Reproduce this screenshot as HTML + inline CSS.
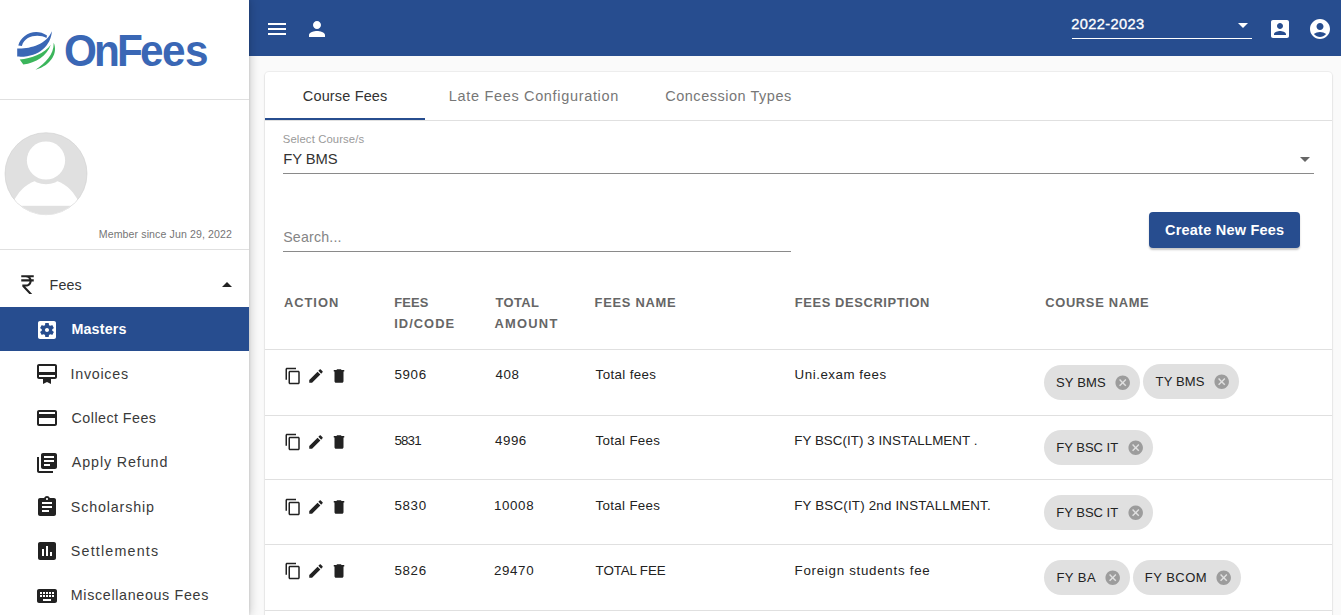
<!DOCTYPE html>
<html><head><meta charset="utf-8">
<style>
*{box-sizing:border-box;margin:0;padding:0}
html,body{width:1341px;height:615px;overflow:hidden;background:#fafafa;font-family:"Liberation Sans",sans-serif;color:#222;position:relative}
.a{position:absolute}
.t{position:absolute;white-space:nowrap;line-height:1}
svg{position:absolute;display:block}
#ov{position:absolute;left:0;top:0;width:1341px;height:615px;z-index:10}
.chip{position:absolute;height:34.8px;border-radius:17.4px;background:#e0e0e0}
.x{position:absolute;width:14.5px;height:14.5px;border-radius:50%;background:#9b9b9b}
.x:before,.x:after{content:"";position:absolute;left:3.25px;top:6.5px;width:8px;height:1.6px;background:#e0e0e0;transform:rotate(45deg)}
.x:after{transform:rotate(-45deg)}
</style></head><body>

<div class="a" style="left:265px;top:72px;width:1067px;height:600px;background:#fff;border-radius:4px;box-shadow:0 0 0 1px rgba(0,0,0,.045),0 1px 3px rgba(0,0,0,.08)"></div>
<div class="a" style="left:249px;top:0;width:1092px;height:56px;background:#274d8f"></div>
<div class="a" style="left:0;top:0;width:249px;height:615px;background:#fff;box-shadow:2px 0 9px rgba(0,0,0,.17),1px 0 2px rgba(0,0,0,.08)"></div>
<div id="ov">
<svg style="left:14px;top:28px" width="46" height="44" viewBox="0 0 46 44">
<path d="M4.3 17.5 C7 7, 21 -1, 33 7.5 L32.5 9.9 C25 6, 11 7, 7.9 17.9 Z" fill="#3a67b5"/>
<path d="M3.2 20.4 C15 21, 32 17, 37.9 3.2 C37 18, 24 30, 3.2 28.6 Z" fill="#3a67b5"/>
<path d="M5.7 31.5 C17 31, 31 25, 36.8 16.8 C33 28, 22 35, 9.3 36.5 Z" fill="#3bb55b"/>
<path d="M39.7 14.7 C44 24, 38 37, 21.5 41.8 C31 35, 40 27, 39.7 14.7 Z" fill="#3bb55b"/>
</svg>
<div class="t" style="left:63.9px;top:28px;font-size:45px;font-weight:bold;color:#3a67b5;transform:scaleX(0.94);transform-origin:0 0">O</div><div class="t" style="left:94.2px;top:28px;font-size:45px;font-weight:bold;color:#3a67b5;transform:scaleX(0.94);transform-origin:0 0">n</div><div class="t" style="left:117.3px;top:28px;font-size:45px;font-weight:bold;color:#3a67b5;transform:scaleX(0.94);transform-origin:0 0">F</div><div class="t" style="left:140.2px;top:28px;font-size:45px;font-weight:bold;color:#3a67b5;transform:scaleX(0.94);transform-origin:0 0">e</div><div class="t" style="left:161.9px;top:28px;font-size:45px;font-weight:bold;color:#3a67b5;transform:scaleX(0.94);transform-origin:0 0">e</div><div class="t" style="left:184.7px;top:28px;font-size:45px;font-weight:bold;color:#3a67b5;transform:scaleX(0.94);transform-origin:0 0">s</div>
<div class="a" style="left:0;top:99px;width:249px;height:1px;background:#e0e0e0"></div>
<svg style="left:4px;top:132px" width="84" height="84" viewBox="4 132 84 84">
<defs><clipPath id="avc"><circle cx="46" cy="173.7" r="40.8"/></clipPath></defs>
<circle cx="46" cy="173.7" r="41" fill="#e0e0e0" stroke="#cfcfcf" stroke-width="0.6"/>
<g clip-path="url(#avc)">
<path d="M8 225 A38 46 0 0 1 84 225 Z" fill="#fff"/>
<rect x="0" y="205.8" width="92" height="12" fill="#e0e0e0"/>
<circle cx="46" cy="160.5" r="23.8" fill="#e0e0e0"/>
<circle cx="46" cy="160.5" r="19.1" fill="#fff"/>
</g>
</svg>
<div class="t" id="member" style="left:98.8px;top:228.71px;font-size:10.58px;letter-spacing:0.104px;color:#757575;">Member since Jun 29, 2022</div>
<div class="a" style="left:0;top:249px;width:249px;height:1px;background:#e0e0e0"></div>
<svg style="left:14.8px;top:271.9px" width="25" height="25" viewBox="0 0 24 24"><path fill="#222" d="M13.66 7c-.56-1.18-1.76-2-3.16-2H6V3h12v2h-3.26c.48.58.84 1.26 1.050 2H18v2h-2.02c-.25 2.8-2.61 5-5.48 5h-.73l6.73 7h-2.77L7 14v-2h3.5c1.76 0 3.22-1.3 3.46-3H6V7h7.66z"/></svg>
<div class="t" id="fees" style="left:49.6px;top:277.85px;font-size:14.3px;letter-spacing:0.068px;color:#333;">Fees</div>
<svg style="left:215px;top:273px" width="24" height="24" viewBox="0 0 24 24"><path d="M7 14l5-5 5 5z" fill="#222"/></svg>
<div class="a" style="left:0;top:307px;width:249px;height:43.5px;background:#274d8f"></div>
<svg style="left:34.5px;top:318px" width="24" height="24" viewBox="0 0 24 24"><path fill="#fff" d="M12 10c-1.1 0-2 .9-2 2s.9 2 2 2 2-.9 2-2-.9-2-2-2zm7-7H5c-1.11 0-2 .9-2 2v14c0 1.1.89 2 2 2h14c1.11 0 2-.9 2-2V5c0-1.1-.89-2-2-2zm-1.75 9c0 .23-.02.46-.05.68l1.48 1.16c.13.11.17.3.08.45l-1.4 2.42c-.09.15-.27.21-.43.15l-1.74-.7c-.36.28-.76.51-1.18.69l-.26 1.85c-.03.17-.18.3-.35.3h-2.8c-.17 0-.32-.13-.35-.29l-.26-1.85c-.43-.18-.82-.41-1.18-.69l-1.74.7c-.16.06-.34 0-.43-.15l-1.4-2.42c-.09-.15-.05-.34.08-.45l1.48-1.16c-.03-.23-.05-.46-.05-.69 0-.23.02-.46.05-.68l-1.48-1.16c-.13-.11-.17-.3-.08-.45l1.4-2.42c.09-.15.27-.21.43-.15l1.74.7c.36-.28.76-.51 1.18-.69l.26-1.85c.03-.17.18-.3.35-.3h2.8c.17 0 .32.13.35.29l.26 1.85c.43.18.82.41 1.18.69l1.74-.7c.16-.06.34 0 .43.15l1.4 2.42c.09.15.05.34-.08.45l-1.48 1.16c.03.23.05.46.05.69z"/></svg>
<div class="t" id="masters" style="left:71.4px;top:321.85px;font-size:14.3px;letter-spacing:0.183px;color:#fff;font-weight:bold;">Masters</div>
<svg style="left:35px;top:362px" width="24" height="24" viewBox="0 0 24 24"><path fill="#222" d="M20 2H4c-1.11 0-2 .89-2 2v11c0 1.11.89 2 2 2h4v5l4-2 4 2v-5h4c1.11 0 2-.89 2-2V4c0-1.11-.89-2-2-2zm0 13H4v-2h16v2zm0-5H4V4h16v6z"/></svg>
<div class="t" id="invoices" style="left:70.6px;top:366.95px;font-size:14.3px;letter-spacing:0.714px;color:#3a3a3a;">Invoices</div>
<svg style="left:35px;top:406px" width="24" height="24" viewBox="0 0 24 24"><path fill="#222" d="M20 4H4c-1.11 0-1.99.89-1.99 2L2 18c0 1.11.89 2 2 2h16c1.11 0 2-.89 2-2V6c0-1.11-.89-2-2-2zm0 14H4v-6h16v6zm0-10H4V6h16v2z"/></svg>
<div class="t" id="collect" style="left:71.6px;top:410.85px;font-size:14.3px;letter-spacing:0.447px;color:#3a3a3a;">Collect Fees</div>
<svg style="left:35px;top:451px" width="24" height="24" viewBox="0 0 24 24"><path fill="#222" d="M4 6H2v14c0 1.1.9 2 2 2h14v-2H4V6zm16-4H8c-1.1 0-2 .9-2 2v12c0 1.1.9 2 2 2h12c1.1 0 2-.9 2-2V4c0-1.1-.9-2-2-2zm-1 9H9V9h10v2zm-4 4H9v-2h6v2zm4-8H9V5h10v2z"/></svg>
<div class="t" id="apply" style="left:71.8px;top:455.14px;font-size:14.3px;letter-spacing:0.882px;color:#3a3a3a;">Apply Refund</div>
<svg style="left:35px;top:495px" width="24" height="24" viewBox="0 0 24 24"><path fill="#222" d="M19 3h-4.18C14.4 1.84 13.3 1 12 1c-1.3 0-2.4.84-2.82 2H5c-1.1 0-2 .9-2 2v14c0 1.1.9 2 2 2h14c1.1 0 2-.9 2-2V5c0-1.1-.9-2-2-2zm-7 0c.55 0 1 .45 1 1s-.45 1-1 1-1-.45-1-1 .45-1 1-1zm2 14H7v-2h7v2zm3-4H7v-2h10v2zm0-4H7V7h10v2z"/></svg>
<div class="t" id="scholar" style="left:70.8px;top:499.85px;font-size:14.3px;letter-spacing:0.85px;color:#3a3a3a;">Scholarship</div>
<svg style="left:35px;top:539px" width="24" height="24" viewBox="0 0 24 24"><path fill="#222" d="M19 3H5c-1.1 0-2 .9-2 2v14c0 1.1.9 2 2 2h14c1.1 0 2-.9 2-2V5c0-1.1-.9-2-2-2zM9 17H7v-7h2v7zm4 0h-2V7h2v10zm4 0h-2v-4h2v4z"/></svg>
<div class="t" id="settle" style="left:70.8px;top:543.85px;font-size:14.3px;letter-spacing:1.18px;color:#3a3a3a;">Settlements</div>
<svg style="left:35px;top:584px" width="24" height="24" viewBox="0 0 24 24"><path fill="#222" d="M20 5H4c-1.1 0-1.99.9-1.99 2L2 17c0 1.1.9 2 2 2h16c1.1 0 2-.9 2-2V7c0-1.1-.9-2-2-2zm-9 3h2v2h-2V8zm0 3h2v2h-2v-2zM8 8h2v2H8V8zm0 3h2v2H8v-2zm-1 2H5v-2h2v2zm0-3H5V8h2v2zm9 7H8v-2h8v2zm0-4h-2v-2h2v2zm0-3h-2V8h2v2zm3 3h-2v-2h2v2zm0-3h-2V8h2v2z"/></svg>
<div class="t" id="misc" style="left:70.8px;top:587.75px;font-size:14.3px;letter-spacing:0.656px;color:#3a3a3a;">Miscellaneous Fees</div>
<svg style="left:265px;top:17px" width="24" height="24" viewBox="0 0 24 24"><path fill="#fff" d="M3 18h18v-2H3v2zm0-5h18v-2H3v2zm0-7v2h18V6H3z"/></svg>
<svg style="left:305px;top:17px" width="24" height="24" viewBox="0 0 24 24"><path fill="#fff" d="M12 12c2.21 0 4-1.79 4-4s-1.79-4-4-4-4 1.79-4 4 1.79 4 4 4zm0 2c-2.67 0-8 1.34-8 4v2h16v-2c0-2.66-5.33-4-8-4z"/></svg>
<div class="t" id="year" style="left:1071.2px;top:17.46px;font-size:14.64px;letter-spacing:0.375px;color:#fff;-webkit-text-stroke:0.35px #fff;">2022-2023</div>
<svg style="left:1231px;top:13px" width="24" height="24" viewBox="0 0 24 24"><path d="M7 10l5 5 5-5z" fill="#fff"/></svg>
<div class="a" style="left:1072px;top:38px;width:180px;height:1px;background:#fff"></div>
<svg style="left:1268px;top:17px" width="24" height="24" viewBox="0 0 24 24"><path fill="#fff" d="M3 5v14c0 1.1.89 2 2 2h14c1.1 0 2-.9 2-2V5c0-1.1-.9-2-2-2H5c-1.11 0-2 .9-2 2zm12 4c0 1.66-1.34 3-3 3s-3-1.34-3-3 1.34-3 3-3 3 1.34 3 3zm-9 8c0-2 4-3.1 6-3.1s6 1.1 6 3.1v1H6v-1z"/></svg>
<svg style="left:1308px;top:17px" width="24" height="24" viewBox="0 0 24 24"><path fill="#fff" d="M12 2C6.48 2 2 6.48 2 12s4.48 10 10 10 10-4.48 10-10S17.52 2 12 2zm0 4c1.93 0 3.5 1.57 3.5 3.5S13.93 13 12 13s-3.5-1.57-3.5-3.5S10.07 6 12 6zm0 14c-2.03 0-4.43-.82-6.14-2.88C7.55 15.8 9.68 15 12 15s4.45.8 6.14 2.12C16.43 19.18 14.03 20 12 20z"/></svg>
<div class="t" id="tab1" style="left:302.8px;top:88.88px;font-size:14.49px;letter-spacing:0.16px;color:#333;">Course Fees</div>
<div class="t" id="tab2" style="left:448.8px;top:88.88px;font-size:14.49px;letter-spacing:0.676px;color:#777;">Late Fees Configuration</div>
<div class="t" id="tab3" style="left:665.2px;top:88.88px;font-size:14.49px;letter-spacing:0.533px;color:#777;">Concession Types</div>
<div class="a" style="left:265px;top:120px;width:1067px;height:1px;background:#e0e0e0"></div>
<div class="a" style="left:265px;top:118px;width:160px;height:2px;background:#274d8f"></div>
<div class="t" id="sellabel" style="left:282.8px;top:134.4px;font-size:11.3px;letter-spacing:0.116px;color:#9a9a9a;">Select Course/s</div>
<div class="t" id="selval" style="left:283.2px;top:152.44px;font-size:14.78px;letter-spacing:-0.08px;color:#333;">FY BMS</div>
<svg style="left:1293px;top:147px" width="24" height="24" viewBox="0 0 24 24"><path d="M7 10l5 5 5-5z" fill="#666"/></svg>
<div class="a" style="left:283px;top:173px;width:1031px;height:1px;background:#8a8a8a"></div>
<div class="t" id="search" style="left:283.2px;top:229.73px;font-size:14.2px;letter-spacing:0.2px;color:#858585;">Search...</div>
<div class="a" style="left:283px;top:251px;width:508px;height:1px;background:#8a8a8a"></div>
<div class="a" style="left:1149px;top:212px;width:151px;height:36px;border-radius:4px;background:#274d8f;box-shadow:0 2px 2px rgba(0,0,0,.22)"></div>
<div class="t" id="btn" style="left:1165.0px;top:222.78px;font-size:14.49px;letter-spacing:0.228px;color:#fff;font-weight:bold;">Create New Fees</div>
<div class="t" id="th_action" style="left:284.0px;top:297.04px;font-size:12.9px;letter-spacing:0.96px;color:#666;font-weight:bold;">ACTION</div>
<div class="t" id="th_fees" style="left:394.2px;top:297.04px;font-size:12.9px;letter-spacing:0.199px;color:#666;font-weight:bold;">FEES</div>
<div class="t" id="th_idcode" style="left:394.2px;top:318.24px;font-size:12.9px;letter-spacing:1.032px;color:#666;font-weight:bold;">ID/CODE</div>
<div class="t" id="th_total" style="left:495.6px;top:297.04px;font-size:12.9px;letter-spacing:0.35px;color:#666;font-weight:bold;">TOTAL</div>
<div class="t" id="th_amount" style="left:494.6px;top:318.24px;font-size:12.9px;letter-spacing:1.22px;color:#666;font-weight:bold;">AMOUNT</div>
<div class="t" id="th_name" style="left:594.6px;top:297.04px;font-size:12.9px;letter-spacing:0.725px;color:#666;font-weight:bold;">FEES NAME</div>
<div class="t" id="th_desc" style="left:794.8px;top:297.04px;font-size:12.9px;letter-spacing:0.614px;color:#666;font-weight:bold;">FEES DESCRIPTION</div>
<div class="t" id="th_course" style="left:1045.2px;top:297.04px;font-size:12.9px;letter-spacing:0.68px;color:#666;font-weight:bold;">COURSE NAME</div>
<div class="a" style="left:265px;top:349px;width:1067px;height:1px;background:#e0e0e0"></div>
<svg style="left:284px;top:367px" width="18" height="18" viewBox="0 0 24 24"><path fill="#222" d="M16 1H4c-1.1 0-2 .9-2 2v14h2V3h12V1zm3 4H8c-1.1 0-2 .9-2 2v14c0 1.1.9 2 2 2h11c1.1 0 2-.9 2-2V7c0-1.1-.9-2-2-2zm0 16H8V7h11v14z"/></svg>
<svg style="left:307px;top:367px" width="18" height="18" viewBox="0 0 24 24"><path fill="#222" d="M3 17.25V21h3.75L17.81 9.94l-3.75-3.75L3 17.25zM20.71 7.04c.39-.39.39-1.02 0-1.41l-2.34-2.34c-.39-.39-1.02-.39-1.41 0l-1.83 1.83 3.75 3.75 1.83-1.83z"/></svg>
<svg style="left:330px;top:367px" width="18" height="18" viewBox="0 0 24 24"><path fill="#222" d="M6 19c0 1.1.9 2 2 2h8c1.1 0 2-.9 2-2V5.5H6v13.5zM19 4h-3.5l-1-1h-5l-1 1H5v2h14V4z"/></svg>
<div class="t" id="r0c0" style="left:394.4px;top:368.47px;font-size:13.33px;letter-spacing:0.666px;color:#222;">5906</div>
<div class="t" id="r0c1" style="left:495.6px;top:368.47px;font-size:13.33px;letter-spacing:0.6px;color:#222;">408</div>
<div class="t" id="r0c2" style="left:595.6px;top:368.47px;font-size:13.33px;letter-spacing:0.377px;color:#222;">Total fees</div>
<div class="t" id="r0c3" style="left:794.6px;top:368.47px;font-size:13.33px;letter-spacing:0.526px;color:#222;">Uni.exam fees</div>
<div class="chip" style="left:1044px;top:365.2px;width:96px"></div>
<svg style="left:1114.05px;top:373.9px" width="17.4" height="17.4" viewBox="0 0 24 24"><path fill="#9c9c9c" d="M12 2C6.47 2 2 6.47 2 12s4.47 10 10 10 10-4.47 10-10S17.53 2 12 2zm5 13.59L15.59 17 12 13.41 8.41 17 7 15.590 10.59 12 7 8.41 8.41 7 12 10.59 15.59 7 17 8.41 13.41 12 17 15.59z"/></svg>
<div class="t" id="ch0_0" style="left:1056.0px;top:375.92px;font-size:13.04px;letter-spacing:0.16px;color:#222;">SY BMS</div>
<div class="chip" style="left:1143px;top:364px;width:96px"></div>
<svg style="left:1213.05px;top:372.7px" width="17.4" height="17.4" viewBox="0 0 24 24"><path fill="#9c9c9c" d="M12 2C6.47 2 2 6.47 2 12s4.47 10 10 10 10-4.47 10-10S17.53 2 12 2zm5 13.59L15.59 17 12 13.41 8.41 17 7 15.590 10.59 12 7 8.41 8.41 7 12 10.59 15.59 7 17 8.41 13.41 12 17 15.59z"/></svg>
<div class="t" id="ch0_1" style="left:1155.6px;top:374.72px;font-size:13.04px;letter-spacing:0.1px;color:#222;">TY BMS</div>
<div class="a" style="left:265px;top:415px;width:1067px;height:1px;background:#e0e0e0"></div>
<svg style="left:284px;top:433.2px" width="18" height="18" viewBox="0 0 24 24"><path fill="#222" d="M16 1H4c-1.1 0-2 .9-2 2v14h2V3h12V1zm3 4H8c-1.1 0-2 .9-2 2v14c0 1.1.9 2 2 2h11c1.1 0 2-.9 2-2V7c0-1.1-.9-2-2-2zm0 16H8V7h11v14z"/></svg>
<svg style="left:307px;top:433.2px" width="18" height="18" viewBox="0 0 24 24"><path fill="#222" d="M3 17.25V21h3.75L17.81 9.94l-3.75-3.75L3 17.25zM20.71 7.04c.39-.39.39-1.02 0-1.41l-2.34-2.34c-.39-.39-1.02-.39-1.41 0l-1.83 1.83 3.75 3.75 1.83-1.83z"/></svg>
<svg style="left:330px;top:433.2px" width="18" height="18" viewBox="0 0 24 24"><path fill="#222" d="M6 19c0 1.1.9 2 2 2h8c1.1 0 2-.9 2-2V5.5H6v13.5zM19 4h-3.5l-1-1h-5l-1 1H5v2h14V4z"/></svg>
<div class="t" id="r1c0" style="left:394.4px;top:433.77px;font-size:13.33px;letter-spacing:-0.834px;color:#222;">5831</div>
<div class="t" id="r1c1" style="left:495.0px;top:433.77px;font-size:13.33px;letter-spacing:0.533px;color:#222;">4996</div>
<div class="t" id="r1c2" style="left:595.6px;top:433.77px;font-size:13.33px;letter-spacing:0.324px;color:#222;">Total Fees</div>
<div class="t" id="r1c3" style="left:794.2px;top:433.77px;font-size:13.33px;letter-spacing:0.072px;color:#222;">FY BSC(IT) 3 INSTALLMENT .</div>
<div class="chip" style="left:1044px;top:430px;width:109px"></div>
<svg style="left:1127.05px;top:438.7px" width="17.4" height="17.4" viewBox="0 0 24 24"><path fill="#9c9c9c" d="M12 2C6.47 2 2 6.47 2 12s4.47 10 10 10 10-4.47 10-10S17.53 2 12 2zm5 13.59L15.59 17 12 13.41 8.41 17 7 15.590 10.59 12 7 8.41 8.41 7 12 10.59 15.59 7 17 8.41 13.41 12 17 15.59z"/></svg>
<div class="t" id="ch1_0" style="left:1056.2px;top:440.72px;font-size:13.04px;letter-spacing:-0.009px;color:#222;">FY BSC IT</div>
<div class="a" style="left:265px;top:479px;width:1067px;height:1px;background:#e0e0e0"></div>
<svg style="left:284px;top:498px" width="18" height="18" viewBox="0 0 24 24"><path fill="#222" d="M16 1H4c-1.1 0-2 .9-2 2v14h2V3h12V1zm3 4H8c-1.1 0-2 .9-2 2v14c0 1.1.9 2 2 2h11c1.1 0 2-.9 2-2V7c0-1.1-.9-2-2-2zm0 16H8V7h11v14z"/></svg>
<svg style="left:307px;top:498px" width="18" height="18" viewBox="0 0 24 24"><path fill="#222" d="M3 17.25V21h3.75L17.81 9.94l-3.75-3.75L3 17.25zM20.71 7.04c.39-.39.39-1.02 0-1.41l-2.34-2.34c-.39-.39-1.02-.39-1.41 0l-1.83 1.83 3.75 3.75 1.83-1.83z"/></svg>
<svg style="left:330px;top:498px" width="18" height="18" viewBox="0 0 24 24"><path fill="#222" d="M6 19c0 1.1.9 2 2 2h8c1.1 0 2-.9 2-2V5.5H6v13.5zM19 4h-3.5l-1-1h-5l-1 1H5v2h14V4z"/></svg>
<div class="t" id="r2c0" style="left:394.4px;top:499.07px;font-size:13.33px;letter-spacing:0.701px;color:#222;">5830</div>
<div class="t" id="r2c1" style="left:494.0px;top:499.07px;font-size:13.33px;letter-spacing:0.625px;color:#222;">10008</div>
<div class="t" id="r2c2" style="left:595.6px;top:499.07px;font-size:13.33px;letter-spacing:0.323px;color:#222;">Total Fees</div>
<div class="t" id="r2c3" style="left:794.2px;top:499.07px;font-size:13.33px;letter-spacing:0.198px;color:#222;">FY BSC(IT) 2nd INSTALLMENT.</div>
<div class="chip" style="left:1044px;top:495.2px;width:109px"></div>
<svg style="left:1127.05px;top:503.9px" width="17.4" height="17.4" viewBox="0 0 24 24"><path fill="#9c9c9c" d="M12 2C6.47 2 2 6.47 2 12s4.47 10 10 10 10-4.47 10-10S17.53 2 12 2zm5 13.59L15.59 17 12 13.41 8.41 17 7 15.590 10.59 12 7 8.41 8.41 7 12 10.59 15.59 7 17 8.41 13.41 12 17 15.59z"/></svg>
<div class="t" id="ch2_0" style="left:1056.2px;top:505.82px;font-size:13.04px;letter-spacing:-0.009px;color:#222;">FY BSC IT</div>
<div class="a" style="left:265px;top:544px;width:1067px;height:1px;background:#e0e0e0"></div>
<svg style="left:284px;top:562px" width="18" height="18" viewBox="0 0 24 24"><path fill="#222" d="M16 1H4c-1.1 0-2 .9-2 2v14h2V3h12V1zm3 4H8c-1.1 0-2 .9-2 2v14c0 1.1.9 2 2 2h11c1.1 0 2-.9 2-2V7c0-1.1-.9-2-2-2zm0 16H8V7h11v14z"/></svg>
<svg style="left:307px;top:562px" width="18" height="18" viewBox="0 0 24 24"><path fill="#222" d="M3 17.25V21h3.75L17.81 9.94l-3.75-3.75L3 17.25zM20.71 7.04c.39-.39.39-1.02 0-1.41l-2.34-2.34c-.39-.39-1.02-.39-1.41 0l-1.83 1.83 3.75 3.75 1.83-1.83z"/></svg>
<svg style="left:330px;top:562px" width="18" height="18" viewBox="0 0 24 24"><path fill="#222" d="M6 19c0 1.1.9 2 2 2h8c1.1 0 2-.9 2-2V5.5H6v13.5zM19 4h-3.5l-1-1h-5l-1 1H5v2h14V4z"/></svg>
<div class="t" id="r3c0" style="left:394.4px;top:564.37px;font-size:13.33px;letter-spacing:0.701px;color:#222;">5826</div>
<div class="t" id="r3c1" style="left:494.0px;top:564.37px;font-size:13.33px;letter-spacing:0.625px;color:#222;">29470</div>
<div class="t" id="r3c2" style="left:595.6px;top:564.37px;font-size:13.33px;letter-spacing:-0.109px;color:#222;">TOTAL FEE</div>
<div class="t" id="r3c3" style="left:794.6px;top:564.37px;font-size:13.33px;letter-spacing:0.714px;color:#222;">Foreign students fee</div>
<div class="chip" style="left:1044px;top:560px;width:86px"></div>
<svg style="left:1104.05px;top:568.7px" width="17.4" height="17.4" viewBox="0 0 24 24"><path fill="#9c9c9c" d="M12 2C6.47 2 2 6.47 2 12s4.47 10 10 10 10-4.47 10-10S17.53 2 12 2zm5 13.59L15.59 17 12 13.41 8.41 17 7 15.590 10.59 12 7 8.41 8.41 7 12 10.59 15.59 7 17 8.41 13.41 12 17 15.59z"/></svg>
<div class="t" id="ch3_0" style="left:1056.4px;top:571.02px;font-size:13.04px;letter-spacing:0.475px;color:#222;">FY BA</div>
<div class="chip" style="left:1133.3px;top:560px;width:108px"></div>
<svg style="left:1215.35px;top:568.7px" width="17.4" height="17.4" viewBox="0 0 24 24"><path fill="#9c9c9c" d="M12 2C6.47 2 2 6.47 2 12s4.47 10 10 10 10-4.47 10-10S17.53 2 12 2zm5 13.59L15.59 17 12 13.41 8.41 17 7 15.590 10.59 12 7 8.41 8.41 7 12 10.59 15.59 7 17 8.41 13.41 12 17 15.59z"/></svg>
<div class="t" id="ch3_1" style="left:1144.8px;top:571.02px;font-size:13.04px;letter-spacing:0.451px;color:#222;">FY BCOM</div>
<div class="a" style="left:265px;top:610px;width:1067px;height:1px;background:#e0e0e0"></div>
</div></body></html>
